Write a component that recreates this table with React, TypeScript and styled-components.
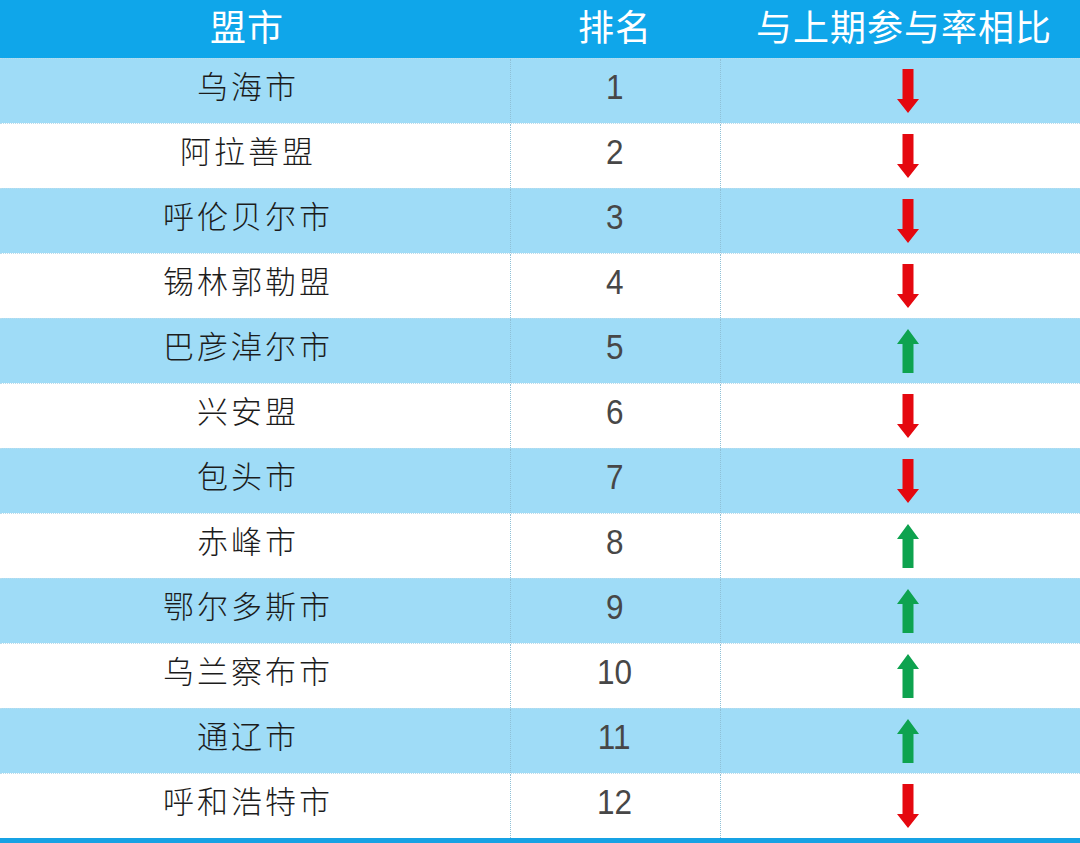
import { createGlobalStyle, styled } from "styled-components";

const GlobalStyle = createGlobalStyle`
    html, body {
        margin: 0;
        padding: 0;
        background: #ffffff;
    }
    body {
        font-family: "Noto Sans CJK SC", "Noto Sans", sans-serif;
    }
`

const Board = styled.div`
    width: 1080px;
    height: 843px;
    overflow: hidden;
    display: flex;
    flex-direction: column;
    background: #ffffff;
`

const Row = styled.div<{ $shade: "head" | "blue" | "white" }>`
    display: grid;
    grid-template-columns: 510px 210px 1fr;
    height: ${p => (p.$shade === "head" ? "58px" : "65px")};
    background: ${p => p.$shade === "head" ? "#0fa6ea" : p.$shade === "blue" ? "#9fdcf7" : "#ffffff"};
    border-top: ${p => (p.$shade === "head" ? "none" : "1px dotted #b9dcec")};
    box-sizing: border-box;
`

const Cell = styled.div<{ $divider?: boolean }>`
    display: flex;
    align-items: center;
    justify-content: center;
    border-left: ${p => (p.$divider ? "1px dotted #8fc0d6" : "none")};
`

const HeadCell = styled.div`
    display: flex;
    align-items: flex-start;
    justify-content: center;
    padding-top: 7px;
`

const HeadText = styled.span<{ $shift?: number }>`
    color: #ffffff;
    font-size: 36px;
    line-height: 36px;
    font-family: "Noto Sans CJK SC", sans-serif;
    letter-spacing: 1px;
    margin-left: ${p => p.$shift ?? 0}px;
`

const CityName = styled.span`
    color: #1c1c1c;
    font-size: 31px;
    line-height: 34px;
    font-family: "Noto Sans CJK SC", sans-serif;
    font-weight: 300;
    letter-spacing: 3px;
    margin-left: -14px;
    margin-bottom: 12px;
`

const Rank = styled.span`
    color: #474747;
    font-size: 35px;
    line-height: 36px;
    font-family: "Liberation Sans", Arial, sans-serif;
    transform: scaleX(0.9);
    margin-bottom: 8px;
    margin-left: -2px;
`

const BottomBar = styled.div`
    height: 5px;
    background: #17a2e4;
    margin-top: auto;
`

const ArrowBox = styled.svg`
    width: 24px;
    height: 46px;
    margin-left: 14px;
`

function Arrow({ up }: { up: boolean }) {
    const color = up ? "#0ea34f" : "#e5080f";
    return (
        <ArrowBox viewBox="0 0 24 46">
            {up ? (
                <path d="M12 1 L23 16 L17.5 16 L17.5 45 L6.5 45 L6.5 16 L1 16 Z" fill={color} />
            ) : (
                <path d="M6.5 1 L17.5 1 L17.5 31 L23 31 L12 45 L1 31 L6.5 31 Z" fill={color} />
            )}
        </ArrowBox>
    );
}

const rows: { city: string; up: boolean }[] = [
    { city: "乌海市", up: false },
    { city: "阿拉善盟", up: false },
    { city: "呼伦贝尔市", up: false },
    { city: "锡林郭勒盟", up: false },
    { city: "巴彦淖尔市", up: true },
    { city: "兴安盟", up: false },
    { city: "包头市", up: false },
    { city: "赤峰市", up: true },
    { city: "鄂尔多斯市", up: true },
    { city: "乌兰察布市", up: true },
    { city: "通辽市", up: true },
    { city: "呼和浩特市", up: false },
];

export default function App() {
    return (
        <>
            <GlobalStyle />
            <Board>
                <Row $shade="head">
                    <HeadCell><HeadText $shift={-16}>盟市</HeadText></HeadCell>
                    <HeadCell><HeadText>排名</HeadText></HeadCell>
                    <HeadCell><HeadText $shift={8}>与上期参与率相比</HeadText></HeadCell>
                </Row>
                {rows.map((r, i) => (
                    <Row key={r.city} $shade={i % 2 === 0 ? "blue" : "white"}>
                        <Cell><CityName>{r.city}</CityName></Cell>
                        <Cell $divider><Rank>{i + 1}</Rank></Cell>
                        <Cell $divider><Arrow up={r.up} /></Cell>
                    </Row>
                ))}
                <BottomBar />
            </Board>
        </>
    );
}
